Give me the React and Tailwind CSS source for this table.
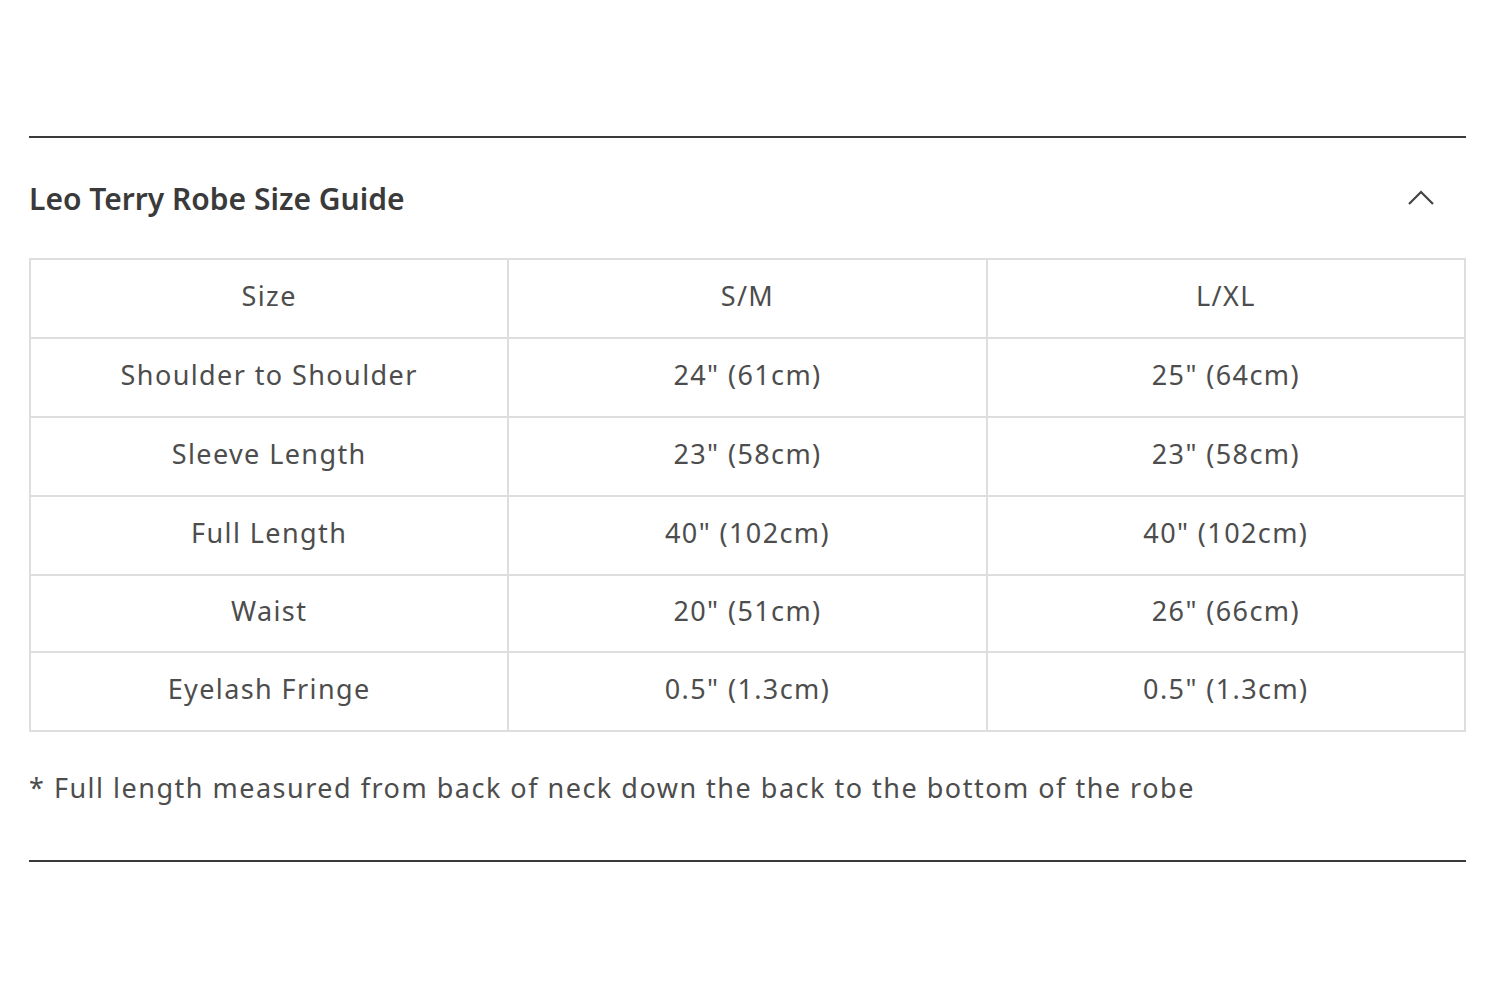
import React from "react";

const rows = [
  ["Size", "S/M", "L/XL"],
  ["Shoulder to Shoulder", '24" (61cm)', '25" (64cm)'],
  ["Sleeve Length", '23" (58cm)', '23" (58cm)'],
  ["Full Length", '40" (102cm)', '40" (102cm)'],
  ["Waist", '20" (51cm)', '26" (66cm)'],
  ["Eyelash Fringe", '0.5" (1.3cm)', '0.5" (1.3cm)'],
];

export default function App() {
  return (
    <div className="w-[1500px] h-[1000px] bg-white pt-[136px] px-[29px] text-[#444]" style={{ fontFamily: '"Noto Sans", sans-serif' }}>
      <div className="w-[1437px] border-t-2 border-[#3a3a3a]" />
      <div className="flex items-center justify-between h-[120px] pr-[37px]">
        <h2 className="text-[30px] font-semibold text-[#3a3a3a] tracking-[0px]">Leo Terry Robe Size Guide</h2>
        <svg width="26" height="16" viewBox="0 0 26 16" fill="none" stroke="#444" strokeWidth="2.2">
          <path d="M1 14 L13 2 L25 14" />
        </svg>
      </div>
      <table className="w-[1437px] border-collapse border-2 border-[#dedede] table-fixed">
        <tbody>
          {rows.map((r, i) => (
            <tr key={i} className={i === 4 ? "h-[77px]" : "h-[79px]"}>
              {r.map((c, j) => (
                <td key={j} className="border-2 border-[#dedede] text-center text-[27px] text-[#4d4d4d] tracking-[1.4px] pb-[4px]">{c}</td>
              ))}
            </tr>
          ))}
        </tbody>
      </table>
      <p className="mt-[36px] text-[27px] text-[#4d4d4d] tracking-[1.5px] leading-[40px]">* Full length measured from back of neck down the back to the bottom of the robe</p>
      <div className="w-[1437px] border-t-2 border-[#3a3a3a] mt-[52px]" />
    </div>
  );
}
